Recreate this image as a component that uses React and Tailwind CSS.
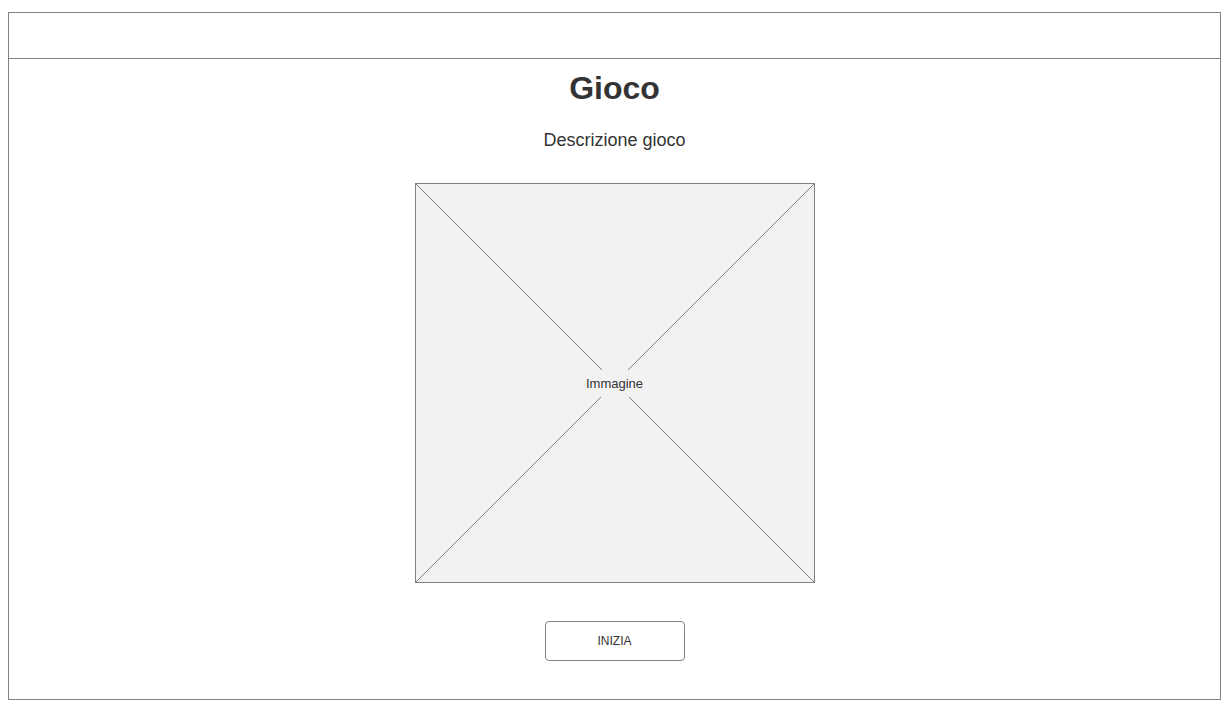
import React from 'react';

const ImagePlaceholder = ({ label }) => (
    <div className="relative w-[400px] h-[400px] border border-[#808080] bg-[#f2f2f2]">
        <svg className="absolute inset-0 w-full h-full" viewBox="0 0 398 398" preserveAspectRatio="none">
            <line x1="0" y1="0" x2="398" y2="398" stroke="#808080" strokeWidth="1" />
            <line x1="398" y1="0" x2="0" y2="398" stroke="#808080" strokeWidth="1" />
        </svg>
        <div className="absolute inset-0 flex items-center justify-center">
            <span className="relative bg-[#f2f2f2] px-[4px] py-[6px] text-[13px] leading-[15px] text-[#333333]">{label}</span>
        </div>
    </div>
);

export default function App() {
    return (
        <div className="min-h-[713px] bg-white pt-[12px] px-[8px] pb-[13px]" style={{ fontFamily: '"Liberation Sans", Arial, sans-serif' }}>
            <div className="w-[1213px] h-[688px] border border-[#808080] flex flex-col">
                {/* top bar */}
                <div className="h-[46px] border-b border-[#808080]" />

                <div className="flex flex-col items-center">
                    <h1 className="mt-[11px] text-[32px] leading-[37px] font-bold text-[#333333]">Gioco</h1>
                    <p className="mt-[23px] text-[18px] leading-[21px] text-[#333333]">Descrizione gioco</p>

                    <div className="mt-[32px]">
                        <ImagePlaceholder label="Immagine" />
                    </div>

                    <button className="mt-[38px] w-[140px] h-[40px] border border-[#808080] rounded-[4px] bg-white text-[12px] text-[#333333]">
                        INIZIA
                    </button>
                </div>
            </div>
        </div>
    );
}
